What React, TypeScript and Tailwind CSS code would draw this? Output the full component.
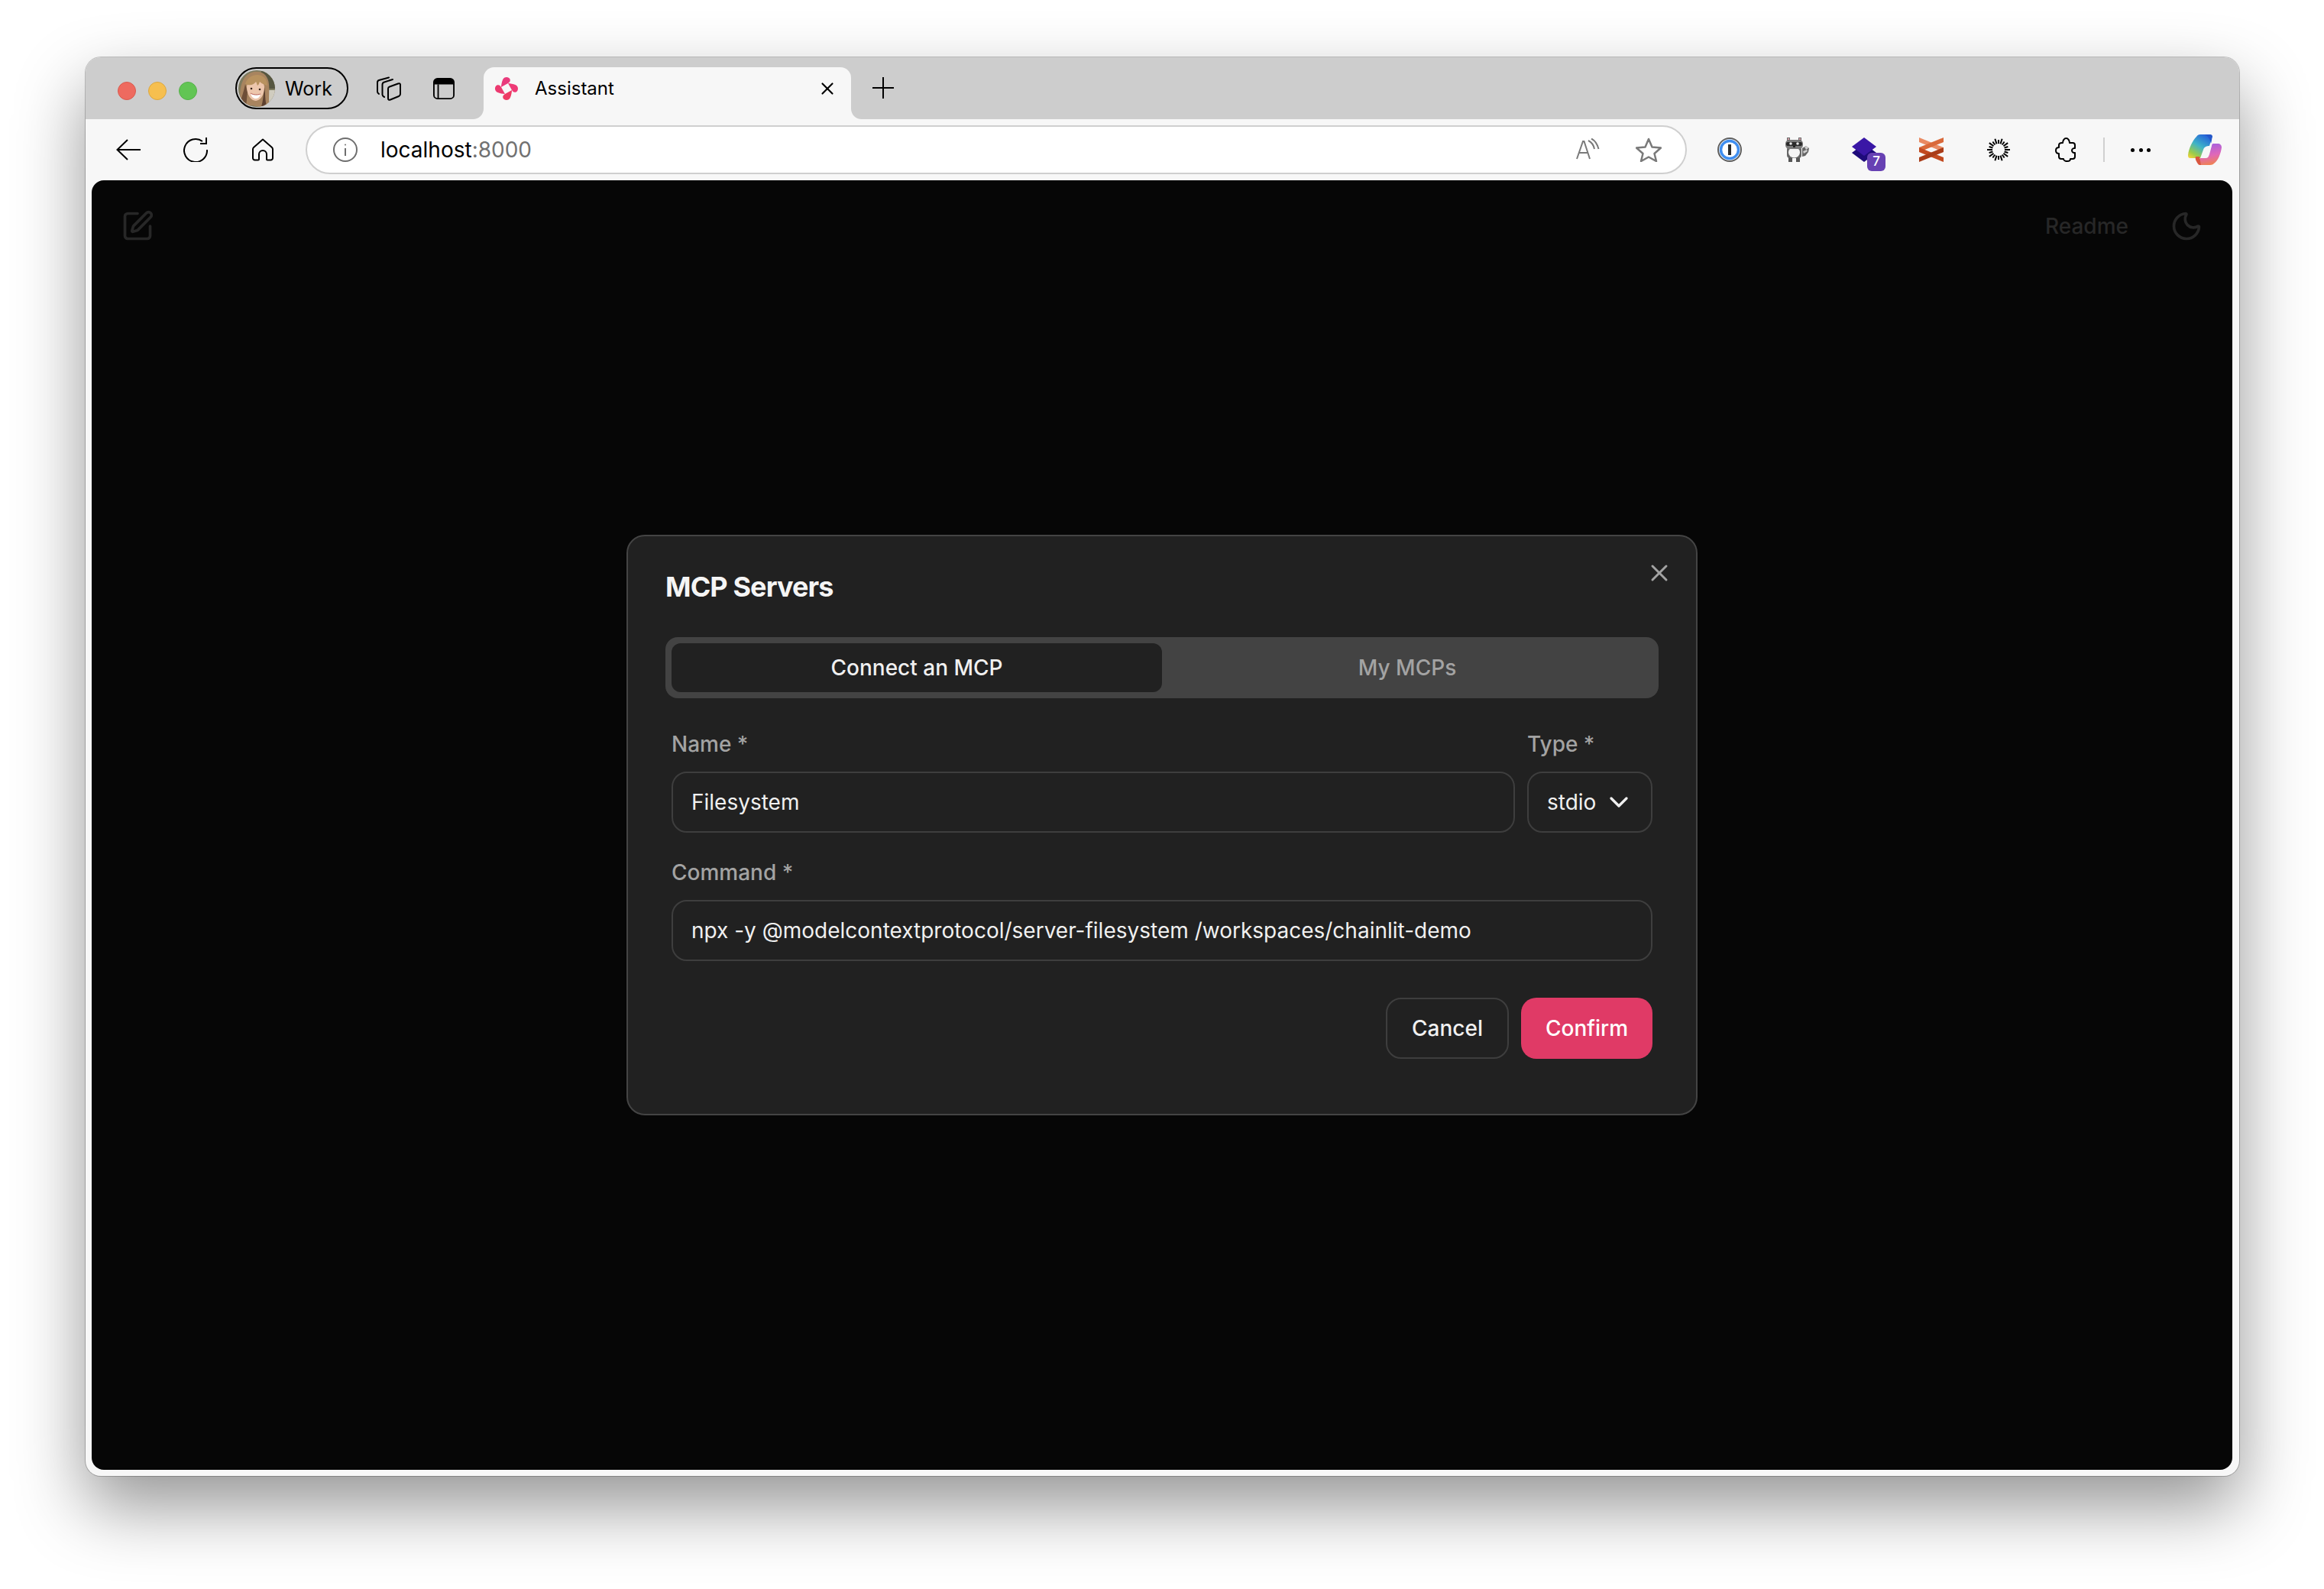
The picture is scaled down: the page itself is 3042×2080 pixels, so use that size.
import { ChevronDown, Moon, SquarePen, X } from "lucide-react";

const INTER = { fontFamily: "Inter, 'Liberation Sans', sans-serif" };

function Avatar() {
  return (
    <svg width="48" height="48" viewBox="0 0 48 48" className="shrink-0 rounded-full">
      <rect width="48" height="48" fill="#7d7a5e" />
      <rect x="30" y="0" width="18" height="24" fill="#565640" />
      <rect x="32" y="26" width="16" height="22" fill="#d0ccbf" />
      {/* long hair behind the face */}
      <path d="M4 48C0 30 2 6 20 2c12-2 19 5 20 16 1 10-1 22 1 30H28l-10-2-6 2Z" fill="#a8845f" />
      <path d="M3 40C6 30 8 24 9 18l3 10-2 20H5Z" fill="#6e4e37" />
      <path d="M34 22c2 8 0 18 4 26h-8c2-7 3-16 4-26Z" fill="#5e4130" />
      {/* face */}
      <path d="M11 22c0-6 5-9 11-9s12 3 12 9c0 9-4 17-11 18-7 0-12-9-12-18Z" fill="#edc6ac" />
      {/* bangs */}
      <path d="M9 18C12 8 22 4 30 7c5 2 8 7 8 13-3-1-7-2-10-5-1 2-1 4-3 5-1-2-1-4-2-5-2 3-7 6-14 3Z" fill="#b8925f" />
      <circle cx="17" cy="24" r="1.300" fill="#35241a" />
      <circle cx="28" cy="25" r="1.300" fill="#35241a" />
      <path d="M16 30c4 2.500 9 2.500 13 1-1 5-4 6-6.500 6S17 35 16 30Z" fill="#fff" />
      <path d="M16 30c4 2.500 9 2.500 13 1" fill="none" stroke="#b5584e" strokeWidth="1" />
    </svg>
  );
}

function ChainlitLogo() {
  const petal = "M9 14C9 11 10 7 11 4.500 12.500 0 19 0 20.500 3.500 21.500 6 20 8 18 9Z";
  return (
    <svg width="32" height="32" viewBox="0 0 32 32" className="shrink-0">
      <path d={petal} fill="#e93a7c" />
      <path d={petal} fill="#ee3a76" transform="rotate(90 16 16)" />
      <path d={petal} fill="#ee3a64" transform="rotate(180 16 16)" />
      <path d={petal} fill="#ec3a70" transform="rotate(270 16 16)" />
    </svg>
  );
}

function Sunburst() {
  const rays = Array.from({ length: 20 }, (_, i) => (i / 20) * Math.PI * 2);
  return (
    <svg width="30" height="30" viewBox="0 0 30 30" className="ml-[57px] shrink-0">
      {rays.map((a, i) => (
        <line
          key={a}
          x1={15 + 8 * Math.cos(a)}
          y1={15 + 8 * Math.sin(a)}
          x2={15 + (i % 2 ? 13 : 15) * Math.cos(a)}
          y2={15 + (i % 2 ? 13 : 15) * Math.sin(a)}
          stroke="#000"
          strokeWidth="2"
        />
      ))}
    </svg>
  );
}

function Copilot() {
  return (
    <svg width="44" height="40" viewBox="0 0 44 40" className="ml-[49px] shrink-0">
      <defs>
        <linearGradient id="cpA" x1="0.7" y1="0" x2="0.1" y2="1">
          <stop offset="0" stopColor="#2563d9" />
          <stop offset="0.45" stopColor="#3fb3c8" />
          <stop offset="0.8" stopColor="#9ccc4a" />
          <stop offset="1" stopColor="#f0d23a" />
        </linearGradient>
        <linearGradient id="cpB" x1="0.4" y1="0" x2="0.6" y2="1">
          <stop offset="0" stopColor="#a45fe0" />
          <stop offset="0.55" stopColor="#e068b8" />
          <stop offset="1" stopColor="#f0844c" />
        </linearGradient>
      </defs>
      <path d="M11 3c1-2 3-3 5-3h12c3 0 4 2 3 5l-3 10c-3 0-7 1-8 5l-4 11H3c-2 0-3-1-3-4C1 18 6 8 11 3Z" fill="url(#cpA)" />
      <path d="M33 12h6c3 0 5 2 5 5-1 8-5 18-10 21-1 1-3 2-5 2H16c-3 0-4-2-3-4l3-5h7c3 0 4-2 5-5l3-11c0-2 1-3 2-3Z" fill="url(#cpB)" />
      <path d="M22 0h6c3 0 4 1 4 3-1 2-1 6-2 9-1-6-4-10-8-12Z" fill="#2457c9" />
      <path d="M13 38c-2-2-4-6-3-9h5l2 11h-1c-1 0-2-1-3-2Z" fill="#d9563f" />
    </svg>
  );
}

function Extensions() {
  return (
    <>
      {/* password manager */}
      <svg width="32" height="32" viewBox="0 0 32 32" className="ml-[40px] shrink-0">
        <circle cx="16" cy="16" r="15" fill="none" stroke="#5f5f5f" strokeWidth="2" />
        <circle cx="16" cy="16" r="11.500" fill="#fff" stroke="#3f8ef0" strokeWidth="3.500" />
        <rect x="14" y="9" width="4" height="14" fill="#2c2c2c" />
      </svg>
      {/* raccoon */}
      <svg width="32" height="32" viewBox="0 0 32 32" className="ml-[56px] shrink-0">
        <path d="M23 14l5-3 4 3-1 5-4 5-4 1Z" fill="#666" />
        <path d="M26 12l3-1 2 3-3 2Z" fill="#cfcfcf" />
        <path d="M24 18l5-2 1 2-5 3Z" fill="#cfcfcf" />
        <rect x="5" y="26" width="5" height="6" fill="#555" />
        <rect x="15" y="26" width="5" height="6" fill="#555" />
        <rect x="3" y="12" width="19" height="15" rx="4" fill="#666" />
        <ellipse cx="12.500" cy="19.500" rx="7.500" ry="7" fill="#f4f4f4" />
        <rect x="1" y="3" width="23" height="12" rx="5" fill="#7a7a7a" />
        <rect x="3" y="0" width="4" height="4" fill="#6a6a6a" />
        <rect x="18" y="0" width="4" height="4" fill="#6a6a6a" />
        <rect x="4" y="1" width="2" height="2" fill="#d9a0a8" />
        <rect x="19" y="1" width="2" height="2" fill="#d9a0a8" />
        <rect x="2" y="6" width="21" height="5" rx="2" fill="#2b2b2b" />
        <circle cx="8" cy="8" r="1.800" fill="#e8e8e8" />
        <circle cx="17" cy="8" r="1.800" fill="#e8e8e8" />
        <rect x="11" y="11" width="3" height="2" fill="#222" />
      </svg>
      {/* stacked diamonds with count */}
      <div className="relative ml-[56px] h-[32px] w-[32px] shrink-0">
        <svg width="32" height="32" viewBox="0 0 32 32">
          <path d="M0 20 16 32l16-12L16 8Z" fill="#1e0b7a" />
          <path d="M0 12 16 0l16 12-16 12Z" fill="#3a17a6" />
        </svg>
        <div className="absolute left-[20px] top-[20px] flex h-[24px] w-[24px] items-center justify-center rounded-[6px] bg-[#6741b3] text-[17px] font-medium text-white">
          7
        </div>
      </div>
      {/* crossed bands */}
      <svg width="32" height="32" viewBox="0 0 32 32" className="ml-[56px] shrink-0">
        <path d="M0 0 32 13v6L0 6Z" fill="#e98a62" />
        <path d="M32 0 0 13v6L32 6Z" fill="#d9693a" />
        <path d="M0 13 32 26v6L0 19Z" fill="#c24a20" />
        <path d="M32 13 0 26v6l32-13Z" fill="#a93c18" />
      </svg>
      <Sunburst />
      {/* puzzle piece */}
      <svg width="28" height="32" viewBox="0 0 28 32" className="ml-[59px] shrink-0" fill="none" stroke="#000" strokeWidth="2" strokeLinejoin="round">
        <path d="M9 7h1c0-3 2-6 4.500-6S19 4 19 7h4c2 0 3 1 3 3v4c-1 0-1 0-1 0-2 0-3 2-3 3s1 3 3 3h1v5c0 2-1 3-3 3h-3c0 2-2 3-4 3s-5-1-5-3H8c-2 0-3-1-3-3v-4c-2 0-4-1-4-4s2-4 4-4v-3c0-2 2-3 4-3Z" />
      </svg>
      <div className="ml-[35px] h-[32px] w-[2px] shrink-0 bg-[#d0d0d0]" />
      <div className="ml-[34px] flex w-[26px] shrink-0 justify-between">
        <span className="h-[5px] w-[5px] rounded-full bg-black" />
        <span className="h-[5px] w-[5px] rounded-full bg-black" />
        <span className="h-[5px] w-[5px] rounded-full bg-black" />
      </div>
      <Copilot />
    </>
  );
}

function TabStrip() {
  return (
    <div className="flex h-[81px] shrink-0 items-start bg-[#cdcdcd] pl-[42px] pt-[13px] text-black">
      <div className="mt-[3px] flex h-[55px] shrink-0 items-center gap-4">
        <span className="h-6 w-6 rounded-full border border-[#d95a4e] bg-[#ee6a5f]" />
        <span className="h-6 w-6 rounded-full border border-[#dca73f] bg-[#f6bf4f]" />
        <span className="h-6 w-6 rounded-full border border-[#55b04a] bg-[#62c554]" />
      </div>
      <div className="ml-[50px] flex h-[55px] w-[148px] shrink-0 items-center gap-[13px] rounded-full border-2 border-black pl-[2px] text-[25px]">
        <Avatar />
        <span className="mt-[2px]">Work</span>
      </div>
      {/* workspaces */}
      <svg width="32" height="32" viewBox="0 0 32 32" className="ml-[37px] mt-[12px] shrink-0" fill="none" stroke="#000" strokeWidth="2" strokeLinejoin="round" strokeLinecap="round">
        <path d="M16 1.500 3 5C1.500 5.500 1 6.500 1 8v12c0 1 .5 2 2 3" />
        <path d="M21 4 10 7.500C8 8 7.500 9 7.500 11v13c0 1 .5 2 2.500 3" />
        <path d="M17 13.500 28 9.500C30 8.800 31 9.500 31 11v12c0 1.500-1 2.500-2 3l-11 4.500c-2 .5-3 0-3-1.500V16c0-1 .5-2 2-2.500Z" />
      </svg>
      <svg width="28" height="28" viewBox="0 0 30 30" className="ml-[42px] mt-[14px] shrink-0">
        <rect x="1" y="1" width="28" height="28" rx="5" fill="none" stroke="#000" strokeWidth="2" />
        <path d="M6 1h18a5 5 0 0 1 5 5v3H1V6a5 5 0 0 1 5-5Z" fill="#000" />
        <rect x="6" y="9" width="2" height="20" fill="#000" />
      </svg>
      {/* active tab */}
      <div className="relative ml-[38px] flex h-[68px] w-[481px] shrink-0 items-center rounded-t-[14px] bg-[#f7f7f7] pb-[12px] pl-[14px]">
        <svg width="14" height="14" viewBox="0 0 14 14" className="absolute -left-[14px] bottom-0" fill="#f7f7f7">
          <path d="M14 0v14H0C8 14 14 8 14 0Z" />
        </svg>
        <svg width="14" height="14" viewBox="0 0 14 14" className="absolute -right-[14px] bottom-0" fill="#f7f7f7">
          <path d="M0 0v14h14C6 14 0 8 0 0Z" />
        </svg>
        <ChainlitLogo />
        <span className="ml-[21px] text-[24px]">Assistant</span>
        <X size={26} strokeWidth={2} className="ml-auto mr-[18px]" />
      </div>
      <svg width="30" height="30" viewBox="0 0 30 30" className="ml-[27px] mt-[12px] shrink-0" stroke="#000" strokeWidth="2">
        <path d="M15 1v28M1 15h28" />
      </svg>
    </div>
  );
}

function Toolbar() {
  return (
    <div className="flex h-[80px] shrink-0 items-center bg-[#f7f7f7] text-black">
      <svg width="32" height="28" viewBox="0 0 32 28" className="ml-[40px] shrink-0" fill="none" stroke="#000" strokeWidth="2">
        <path d="M32 14H1.500M15 1 1.500 14 15 27" />
      </svg>
      <svg width="32" height="32" viewBox="0 0 32 32" className="ml-[56px] shrink-0" fill="none" stroke="#000" strokeWidth="2">
        <path d="M25 5a15 15 0 1 0 6 11" />
        <path d="M30 0v8h-8" />
      </svg>
      <svg width="28" height="30" viewBox="0 0 28 30" className="ml-[58px] shrink-0" fill="none" stroke="#000" strokeWidth="2" strokeLinejoin="round">
        <path d="M14 1.500 2 12c-.8.800-1 1.500-1 2.500V26a2.500 2.500 0 0 0 2.500 2.500H8a1 1 0 0 0 1-1V21a5 5 0 0 1 10 0v6.500a1 1 0 0 0 1 1h4.500A2.500 2.500 0 0 0 27 26V14.500c0-1-.2-1.700-1-2.500Z" />
      </svg>
      <div className="ml-[42px] flex h-[64px] w-[1808px] shrink-0 items-center rounded-full border-[2px] border-[#cfcfcf] bg-white pl-[34px] pr-[31px]">
        <svg width="32" height="32" viewBox="0 0 32 32" className="shrink-0" fill="none" stroke="#6e6e6e" strokeWidth="2">
          <circle cx="16" cy="16" r="15" />
          <path d="M16 14v10" />
          <circle cx="16" cy="9.500" r="1" fill="#6e6e6e" stroke="none" />
        </svg>
        <span className="ml-[30px] text-[28px]">
          localhost<span className="text-[#717171]">:8000</span>
        </span>
        <svg width="32" height="30" viewBox="0 0 32 30" className="ml-auto shrink-0" fill="none" stroke="#7a7a7a" strokeWidth="2">
          <path d="M1 27 9 4h1.500L18 27M4.500 19H15" />
          <path d="M16 3c4 2 7 6 8 11M20 .5c5 2.500 8 7.500 9.500 13.500" />
        </svg>
        <svg width="34" height="32" viewBox="0 0 34 32" className="ml-[46px] shrink-0" fill="none" stroke="#7a7a7a" strokeWidth="2.500" strokeLinejoin="round">
          <path d="M17 2l4.500 10.500L33 13.500l-8.500 7.500L27 31l-10-5.500L7 31l2.500-10L1 13.500l11.500-1Z" />
        </svg>
      </div>
      <Extensions />
    </div>
  );
}

function Field({ label, value }: { label: string; value: string }) {
  return (
    <div>
      <div className="mb-4 text-[28px] font-medium leading-[40px] text-[#a3a3a3]">{label}</div>
      <div className="flex h-[80px] items-center rounded-[20px] border-2 border-[#3e3e3e] px-6 text-[28px] text-[#f0f0f0]">
        {value}
      </div>
    </div>
  );
}

function McpDialog() {
  return (
    <div className="absolute inset-0 flex items-center justify-center">
      <div className="relative h-[760px] w-[1402px] rounded-3xl border-2 border-[#444444] bg-[#212121] px-[49px] pt-12">
        <h2 className="text-[36px] font-bold leading-[36px] tracking-tight text-[#f5f5f5]">MCP Servers</h2>
        <X size={36} strokeWidth={2} className="absolute right-[30px] top-[30px] text-[#a3a3a3]" />

        {/* Tabs */}
        <div className="mt-12 grid h-[80px] grid-cols-2 rounded-2xl bg-[#434343] p-2 text-[28px] font-medium">
          <div className="flex items-center justify-center rounded-xl bg-[#212121] text-[#f0f0f0]">Connect an MCP</div>
          <div className="flex items-center justify-center text-[#a3a3a3]">My MCPs</div>
        </div>

        {/* Form */}
        <div className="px-2 pt-10">
          <div className="flex gap-4">
            <div className="flex-1">
              <Field label="Name *" value="Filesystem" />
            </div>
            <div className="w-[164px]">
              <div className="mb-4 text-[28px] font-medium leading-[40px] text-[#a3a3a3]">Type *</div>
              <div className="flex h-[80px] items-center justify-between rounded-[20px] border-2 border-[#3e3e3e] pl-6 pr-[22px] text-[28px] text-[#f0f0f0]">
                stdio
                <ChevronDown size={40} strokeWidth={2} />
              </div>
            </div>
          </div>
          <div className="mt-8">
            <Field label="Command *" value="npx -y @modelcontextprotocol/server-filesystem /workspaces/chainlit-demo" />
          </div>
          <div className="mt-12 flex justify-end gap-4 text-[28px] font-medium">
            <div className="flex h-[80px] w-[161px] items-center justify-center rounded-[20px] border-2 border-[#3e3e3e] text-[#f0f0f0]">Cancel</div>
            <div className="flex h-[80px] w-[172px] items-center justify-center rounded-[20px] bg-[#e03a66] text-white">Confirm</div>
          </div>
        </div>
      </div>
    </div>
  );
}

export default function App() {
  return (
    <div className="h-[2080px] w-[3042px] overflow-hidden bg-white pl-[112px] pt-[75px]" style={INTER}>
      <div className="flex h-[1857px] w-[2819px] flex-col overflow-hidden rounded-[20px] bg-[#f7f7f7] shadow-[0_0_0_1px_rgba(0,0,0,0.22),0_40px_90px_0_rgba(0,0,0,0.42)]">
        <TabStrip />
        <Toolbar />
        <div className="relative mb-2 ml-2 mr-[9px] flex-1 overflow-hidden rounded-[16px] bg-[#060606]">
          <div className="flex items-center px-[38px] pt-[38px] text-[#272727]">
            <SquarePen size={44} strokeWidth={2} />
            <span className="ml-auto text-[28px] font-medium">Readme</span>
            <Moon size={44} strokeWidth={2} className="ml-[54px]" />
          </div>
          <McpDialog />
        </div>
      </div>
    </div>
  );
}
